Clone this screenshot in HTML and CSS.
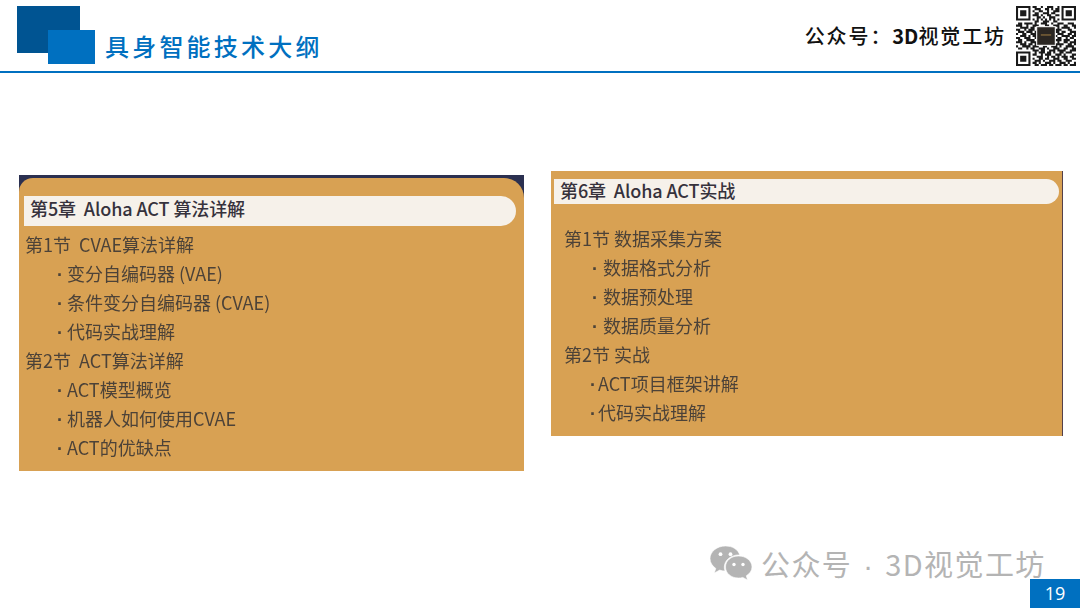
FILE: index.html
```html
<!DOCTYPE html>
<html lang="zh">
<head>
<meta charset="utf-8">
<title>具身智能技术大纲</title>
<link rel="stylesheet" href="styles.css">
</head>
<body>
<div class="slide">
  <header class="header">
    <div class="logo"><span class="logo-front"></span></div>
    <h1 class="title">具身智能技术大纲</h1>
    <div class="account">公众号：<span class="account-num">3D</span>视觉工坊</div>
    <svg class="qr" viewBox="0 0 29 29" aria-hidden="true">
      <path class="qr-mod" d="M0 .5h7M0 1.5h1M6 1.5h1M0 2.5h1M2 2.5h3M6 2.5h1M0 3.5h1M2 3.5h3M6 3.5h1M0 4.5h1M2 4.5h3M6 4.5h1M0 5.5h1M6 5.5h1M0 6.5h7M22 .5h7M22 1.5h1M28 1.5h1M22 2.5h1M24 2.5h3M28 2.5h1M22 3.5h1M24 3.5h3M28 3.5h1M22 4.5h1M24 4.5h3M28 4.5h1M22 5.5h1M28 5.5h1M22 6.5h7M0 22.5h7M0 23.5h1M6 23.5h1M0 24.5h1M2 24.5h3M6 24.5h1M0 25.5h1M2 25.5h3M6 25.5h1M0 26.5h1M2 26.5h3M6 26.5h1M0 27.5h1M6 27.5h1M0 28.5h7
      M8 .5h2M12 .5h1M15 .5h3M20 .5h1M9 1.5h3M14 1.5h2M17 1.5h1M19 1.5h2M8 2.5h1M11 2.5h2M15 2.5h1M18 2.5h3M9 3.5h2M13 3.5h3M17 3.5h2M8 4.5h3M12 4.5h1M15 4.5h2M19 4.5h2M10 5.5h2M13 5.5h1M16 5.5h3M8 6.5h1M10 6.5h1M12 6.5h1M14 6.5h1M16 6.5h1M18 6.5h1M20 6.5h1M9 7.5h2M13 7.5h3M18 7.5h2
      M1 8.5h2M4 8.5h4M9 8.5h1M12 8.5h3M17 8.5h1M20 8.5h3M25 8.5h3M0 9.5h3M5 9.5h1M8 9.5h3M14 9.5h2M18 9.5h3M23 9.5h2M27 9.5h2M2 10.5h4M7 10.5h2M11 10.5h2M15 10.5h3M20 10.5h1M22 10.5h4M28 10.5h1M0 11.5h2M4 11.5h1M6 11.5h3M10 11.5h2M16 11.5h2M19 11.5h3M25 11.5h2M1 12.5h3M5 12.5h3M9 12.5h1M19 12.5h2M22 12.5h2M26 12.5h3M0 13.5h1M3 13.5h2M7 13.5h3M20 13.5h3M25 13.5h2M28 13.5h1M2 14.5h3M6 14.5h1M8 14.5h2M19 14.5h1M22 14.5h4M27 14.5h2M0 15.5h2M4 15.5h3M9 15.5h1M20 15.5h2M24 15.5h1M26 15.5h2M1 16.5h2M5 16.5h4M19 16.5h3M23 16.5h3M28 16.5h1M0 17.5h3M4 17.5h1M7 17.5h3M20 17.5h1M23 17.5h2M26 17.5h3M2 18.5h3M6 18.5h2M9 18.5h1M19 18.5h4M25 18.5h2M28 18.5h1M0 19.5h1M3 19.5h4M8 19.5h3M13 19.5h2M17 19.5h3M21 19.5h1M24 19.5h4M1 20.5h2M5 20.5h1M7 20.5h2M11 20.5h3M15 20.5h1M18 20.5h3M23 20.5h2M27 20.5h2
      M8 21.5h3M12 21.5h2M16 21.5h3M20 21.5h4M26 21.5h3M9 22.5h1M11 22.5h3M15 22.5h2M18 22.5h1M21 22.5h2M24 22.5h3M8 23.5h2M12 23.5h1M14 23.5h3M19 23.5h3M23 23.5h1M27 23.5h2M10 24.5h3M15 24.5h1M17 24.5h2M20 24.5h1M22 24.5h3M26 24.5h2M8 25.5h1M11 25.5h2M14 25.5h2M18 25.5h3M23 25.5h2M27 25.5h2M9 26.5h3M13 26.5h1M16 26.5h3M20 26.5h2M24 26.5h3M8 27.5h2M11 27.5h1M14 27.5h3M18 27.5h1M21 27.5h3M25 27.5h1M28 27.5h1M9 28.5h2M12 28.5h3M16 28.5h2M19 28.5h3M23 28.5h2M26 28.5h3"/>
      <rect class="qr-chip" x="10" y="10" width="9" height="9"/>
      <rect class="qr-gold" x="12" y="13.700" width="5" height=".6"/>
    </svg>
  </header>

  <main class="content">
    <section class="card card-left">
      <div class="card-inner">
        <div class="pill pill-left">第5章&nbsp; Aloha ACT 算法详解</div>
        <ul class="outline">
          <li class="sec">第1节&nbsp; CVAE算法详解</li>
          <li class="item"><span class="dot">·</span>变分自编码器 (VAE)</li>
          <li class="item"><span class="dot">·</span>条件变分自编码器 (CVAE)</li>
          <li class="item"><span class="dot">·</span>代码实战理解</li>
          <li class="sec">第2节&nbsp; ACT算法详解</li>
          <li class="item"><span class="dot">·</span>ACT模型概览</li>
          <li class="item"><span class="dot">·</span>机器人如何使用CVAE</li>
          <li class="item"><span class="dot">·</span>ACT的优缺点</li>
        </ul>
      </div>
    </section>

    <section class="card-right">
      <div class="pill pill-right">第6章&nbsp; Aloha ACT实战</div>
      <ul class="outline outline-right">
        <li class="sec">第1节 数据采集方案</li>
        <li class="item"><span class="dot">·</span>数据格式分析</li>
        <li class="item"><span class="dot">·</span>数据预处理</li>
        <li class="item"><span class="dot">·</span>数据质量分析</li>
        <li class="sec">第2节 实战</li>
        <li class="item tight"><span class="dot">·</span>ACT项目框架讲解</li>
        <li class="item tight"><span class="dot">·</span>代码实战理解</li>
      </ul>
    </section>
  </main>

  <div class="watermark">
    <svg class="wechat" viewBox="0 0 42 34" aria-hidden="true">
      <path class="wc" d="M15.500 0C7 0 0 5.600 0 12.600c0 4 2.300 7.500 5.800 9.800L4.300 27l5.400-2.900c1.700.6 3.500.9 5.300 1-.5-1.300-.7-2.600-.7-4 0-6.800 6.500-12.200 14.400-12.200h1C28.200 3.400 22.400 0 15.500 0z"/>
      <circle class="wc-eye" cx="10.500" cy="8.200" r="1.900"/>
      <circle class="wc-eye" cx="20.500" cy="8.200" r="1.900"/>
      <path class="wc" d="M28.500 10C21 10 15.500 14.800 15.500 21s5.500 11 13 11c1.500 0 3-.2 4.300-.6L37.500 34l-1.200-4.200c3.400-2 5.700-5.200 5.700-8.800 0-6.200-6-11-13.500-11z"/>
      <circle class="wc-eye" cx="24" cy="18.500" r="1.700"/>
      <circle class="wc-eye" cx="33" cy="18.500" r="1.700"/>
    </svg>
    <span class="wm-text">公众号<span class="wm-dot">·</span>3D视觉工坊</span>
  </div>
  <div class="page-no">19</div>
</div>
</body>
</html>
```

FILE: styles.css
```css
* { box-sizing: border-box; }
html, body { margin: 0; padding: 0; background: #fff; }
body { font-family: "Noto Sans CJK SC", "Noto Sans", sans-serif; }
.slide { position: relative; width: 1080px; height: 608px; overflow: hidden; background: #fff; }

.header {
  height: 73px;
  border-bottom: 2px solid #0070c0;
  display: flex;
  align-items: flex-start;
  padding: 6px 4px 0 17px;
}
.logo { position: relative; width: 63px; height: 47px; background: #005492; flex: none; }
.logo-front {
  position: absolute; left: 31px; top: 24px;
  width: 47px; height: 34px; background: #0070c0;
}
.title {
  margin: 23px 0 0 25px;
  font-size: 24px; line-height: 34px; font-weight: 500;
  letter-spacing: 3.2px; color: #0070c0; white-space: nowrap;
}
.account {
  margin: 15px 10px 0 auto;
  font-size: 20px; line-height: 30px; font-weight: 500;
  letter-spacing: 1.9px; color: #111; white-space: nowrap;
}
.account-num { font-weight: 700; letter-spacing: 0; }
.qr { width: 60px; height: 60px; flex: none; filter: blur(.3px); }
.qr-mod { fill: none; stroke: #1a1a1a; stroke-width: 1; }
.qr-chip { fill: #2a2622; stroke: #fff; stroke-width: .5; }
.qr-gold { fill: #8a6d3c; }

.content {
  display: flex; align-items: flex-start; gap: 27px;
  padding-left: 19px;
}
.card {
  width: 505px; height: 296px; margin-top: 102px;
  background: linear-gradient(#2b3050 0 24px, #d8a153 24px);
  padding-top: 3px;
}
.card-inner {
  height: 293px; background: #d8a153;
  border-radius: 14px 20px 0 0;
  padding: 18px 8px 0 5px;
}
.card-right {
  width: 512px; height: 265px; margin-top: 98px;
  background: #d8a153;
  border-right: 1px solid #54404a;
  padding: 8px 3px 0 3px;
}
.pill {
  background: #f6f1ea;
  border-radius: 0 15px 15px 0;
  color: #36323c; font-weight: 500; font-size: 18px;
  letter-spacing: -.1px;
  white-space: nowrap;
}
.pill-left { height: 30px; line-height: 24px; padding-left: 6px; }
.pill-right { height: 25px; line-height: 23px; padding-left: 6px; border-radius: 0 13px 13px 0; }

.outline { list-style: none; margin: 4px 0 0; padding: 0 0 0 1px; filter: blur(.25px); }
.outline-right { margin-top: 20px; padding-left: 10px; }
.outline li {
  height: 29px; line-height: 29px;
  font-size: 18px; color: #4c4238; white-space: nowrap;
}
.item { padding-left: 32px; }
.dot { display: inline-block; width: 10px; font-family: "Liberation Sans", sans-serif; font-weight: 700; }
.outline-right .item { padding-left: 26px; }
.outline-right .dot { width: 13px; padding-left: 2px; }
.outline-right .item.tight { padding-left: 26px; }
.outline-right .tight .dot { width: 8px; padding-left: 0; }

.watermark {
  position: absolute; left: 710px; top: 545px;
  display: flex; align-items: center; gap: 9px; height: 38px;
}
.wechat { width: 42px; height: 34px; flex: none; margin-top: -2px; }
.wc { fill: #b4b4b4; stroke: #fff; stroke-width: .6; }
.wc-eye { fill: #fff; }
.wm-text { font-size: 29px; line-height: 38px; color: #b4b4b4; white-space: nowrap; letter-spacing: 1.4px; }
.wm-dot { font-family: "Liberation Sans", sans-serif; margin: 0 11px; }
.page-no {
  position: absolute; right: 0; bottom: 0;
  width: 50px; height: 29px; background: #0070c0;
  color: #fff; font-family: "Open Sans", sans-serif; font-size: 18px; line-height: 29px;
  text-align: center;
}
```
